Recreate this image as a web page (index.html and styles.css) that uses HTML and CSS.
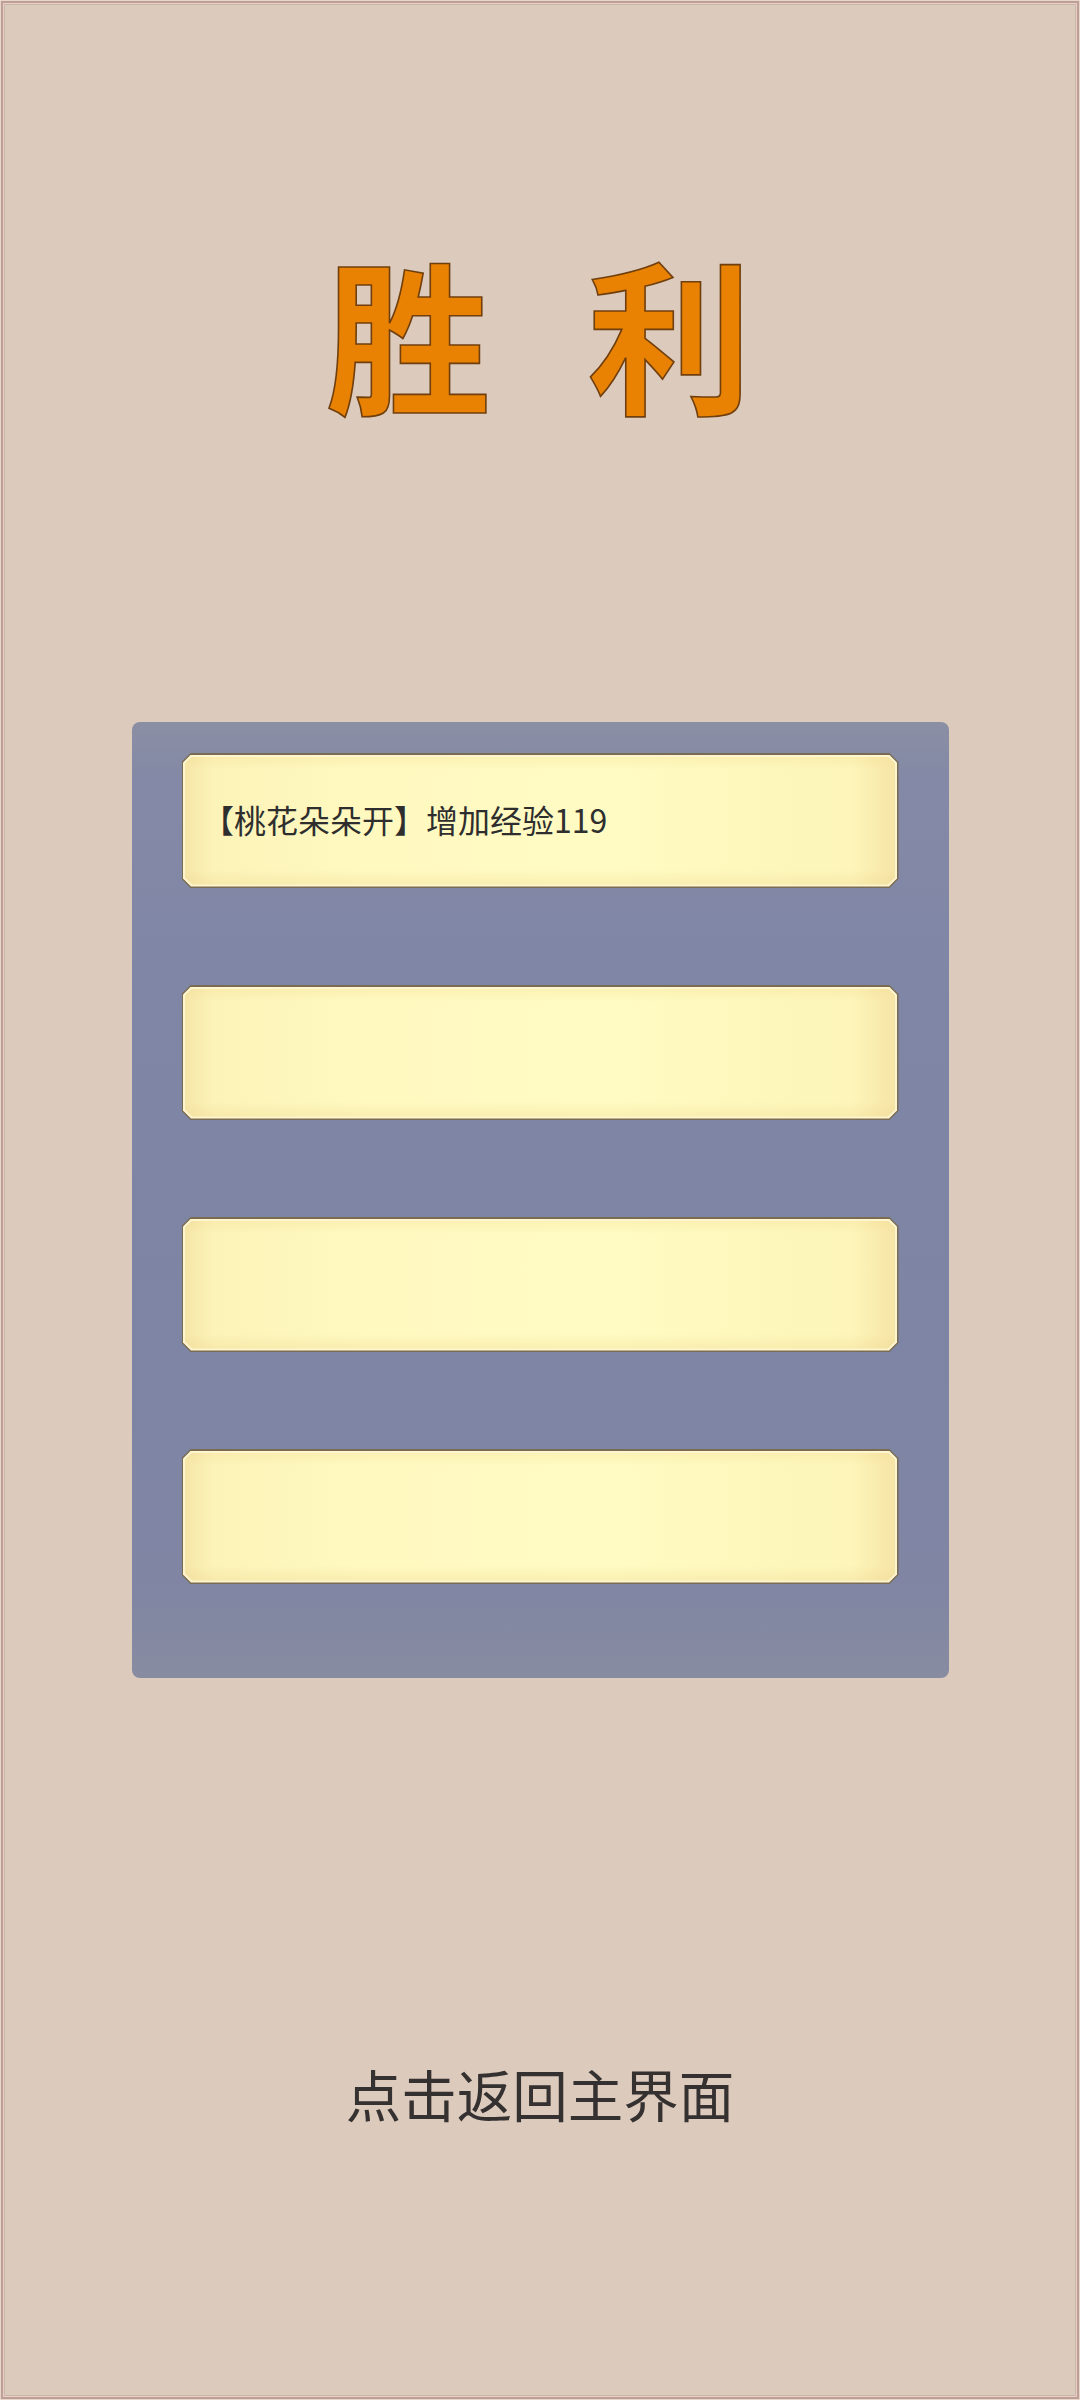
FILE: index.html
```html
<!DOCTYPE html>
<html lang="zh">
<head>
<meta charset="utf-8">
<title>胜利</title>
<link rel="stylesheet" href="styles.css">
</head>
<body>
<div class="screen">
  <div class="title"><span class="title-char">胜</span><span class="title-char">利</span></div>
  <div class="panel">
    <div class="slot"><div class="slot-edge"><div class="slot-fill">【桃花朵朵开】增加经验119</div></div></div>
    <div class="slot"><div class="slot-edge"><div class="slot-fill"></div></div></div>
    <div class="slot"><div class="slot-edge"><div class="slot-fill"></div></div></div>
    <div class="slot"><div class="slot-edge"><div class="slot-fill"></div></div></div>
  </div>
  <div class="back">点击返回主界面</div>
</div>
</body>
</html>
```

FILE: styles.css
```css
html, body {
  margin: 0;
  padding: 0;
  background: #dccabd;
}

.screen {
  width: 1080px;
  height: 2400px;
  box-sizing: border-box;
  background: #dccabd;
  border: 1px solid #e6d6cc;
  box-shadow: inset 0 0 0 2px #bf9f95, inset 0 0 0 3px #e3d2c7, inset 0 0 0 4px #cdb3a8;
  display: flex;
  flex-direction: column;
  align-items: center;
  font-family: "Noto Sans CJK SC", "Noto Sans", sans-serif;
}

.title {
  margin-top: 247px;
  height: 165px;
  display: flex;
  gap: 96px;
  margin-left: -2px;
}

.title-char {
  font-size: 165px;
  line-height: 165px;
  font-weight: 700;
  color: #e98103;
  -webkit-text-stroke: 1.6px #6f3f0e;
}

.panel {
  margin-top: 309px;
  width: 817px;
  height: 956px;
  box-sizing: border-box;
  padding: 31px 50px 94px;
  display: flex;
  flex-direction: column;
  gap: 97px;
  border-radius: 8px;
  background: linear-gradient(180deg, #8b8fa4 0%, #8389a6 6%, #7e85a5 40%, #7f85a3 90%, #888ca1 100%);
}

.slot {
  height: 135px;
  background: #7a6c52;
  clip-path: polygon(9px 0, calc(100% - 9px) 0, 100% 9px, 100% calc(100% - 9px), calc(100% - 9px) 100%, 9px 100%, 0 calc(100% - 9px), 0 9px);
  padding: 1.5px;
  box-sizing: border-box;
}

.slot-edge {
  height: 100%;
  background: #fff6cf;
  clip-path: polygon(8px 0, calc(100% - 8px) 0, 100% 8px, 100% calc(100% - 8px), calc(100% - 8px) 100%, 8px 100%, 0 calc(100% - 8px), 0 8px);
  padding: 2px;
  box-sizing: border-box;
}

.slot-fill {
  height: 100%;
  box-sizing: border-box;
  clip-path: polygon(7px 0, calc(100% - 7px) 0, 100% 7px, 100% calc(100% - 7px), calc(100% - 7px) 100%, 7px 100%, 0 calc(100% - 7px), 0 7px);
  background:
    linear-gradient(180deg, rgba(240, 214, 140, 0.25) 0%, rgba(255, 250, 190, 0) 10%, rgba(255, 250, 190, 0) 88%, rgba(236, 210, 140, 0.3) 100%),
    linear-gradient(90deg, #f6e6a8 0%, #fcf3b8 4%, #fff9c0 25%, #fffbc2 60%, #fdf5b9 94%, #f6e5a6 100%);
  display: flex;
  align-items: center;
  padding-left: 17px;
  padding-bottom: 3px;
  font-size: 32px;
  color: #2e2e2e;
}

.back {
  margin-top: 387px;
  font-size: 55.5px;
  line-height: 56px;
  color: #353130;
  margin-left: 0;
}
```
